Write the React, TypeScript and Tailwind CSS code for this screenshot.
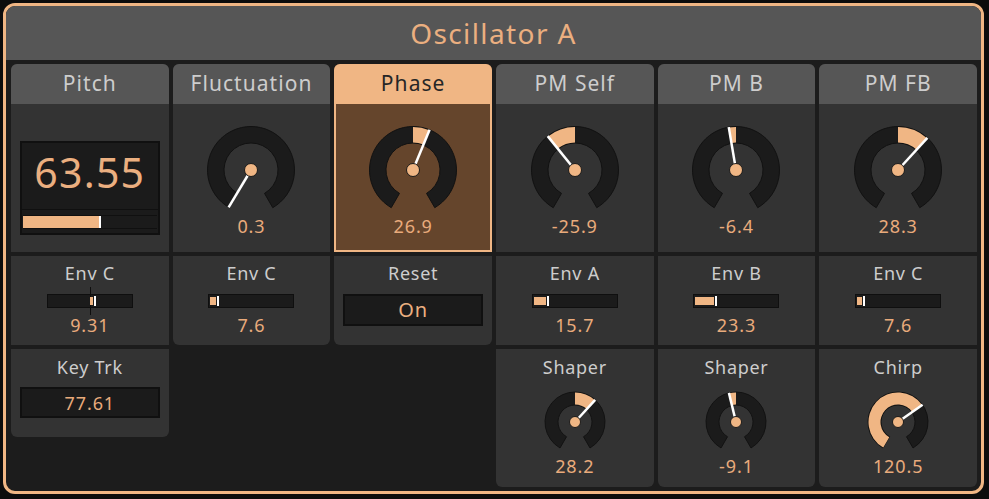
const ORANGE = '#f0b684'

function polar(cx: number, cy: number, rad: number, deg: number) {
  const a = ((deg - 90) * Math.PI) / 180
  return [cx + rad * Math.cos(a), cy + rad * Math.sin(a)]
}

function arc(cx: number, cy: number, R: number, r: number, a1: number, a2: number) {
  const [x1, y1] = polar(cx, cy, R, a1)
  const [x2, y2] = polar(cx, cy, R, a2)
  const [x3, y3] = polar(cx, cy, r, a2)
  const [x4, y4] = polar(cx, cy, r, a1)
  const large = a2 - a1 > 180 ? 1 : 0
  return `M${x1} ${y1} A${R} ${R} 0 ${large} 1 ${x2} ${y2} L${x3} ${y3} A${r} ${r} 0 ${large} 0 ${x4} ${y4} Z`
}

type KnobProps = { angle: number; from?: number; size?: 'lg' | 'sm' }

function Knob({ angle, from = 0, size = 'lg' }: KnobProps) {
  const lg = size === 'lg'
  const R = lg ? 43.5 : 30
  const r = lg ? 27 : 17
  const dot = lg ? 6.5 : 5.5
  const box = lg ? 90 : 64
  const c = box / 2
  const a1 = Math.min(from, angle)
  const a2 = Math.max(from, angle)
  const [nx, ny] = polar(c, c, R, angle)
  return (
    <svg width={box} height={box} viewBox={`0 0 ${box} ${box}`}>
      <path d={arc(c, c, R, r, -150, 150)} fill="#1b1b1b" stroke="#121212" strokeWidth={1} />
      {a2 - a1 > 0.5 && <path d={arc(c, c, R - 0.5, r + 0.5, a1, a2)} fill={ORANGE} />}
      <line x1={c} y1={c} x2={nx} y2={ny} stroke="#ffffff" strokeWidth={2.5} />
      <circle cx={c} cy={c} r={dot} fill={ORANGE} stroke="#1b1b1b" strokeWidth={1} />
    </svg>
  )
}

function Slider({ value, bipolar = false }: { value: number; bipolar?: boolean }) {
  const inner = 82
  const left = bipolar ? inner / 2 : 0
  const end = bipolar ? inner / 2 + (value / 100) * (inner / 2) : (value / 100) * inner
  return (
    <div className="relative mt-[10px] h-[14px] w-[86px] border border-[#0f0f0f] bg-[#1b1b1b]">
      {bipolar && <div className="absolute left-[42px] top-[-8px] h-[28px] w-px bg-[#0e0e0e]" />}
      <div
        className="absolute top-[2px] h-[8px] bg-[#f0b684]"
        style={{ left: 1 + Math.min(left, end), width: Math.abs(end - left) }}
      />
      <div
        className="absolute top-[1px] h-[10px] w-[4px] border-x border-[#1b1b1b] bg-white"
        style={{ left: end }}
      />
    </div>
  )
}

function Header({ label, active = false }: { label: string; active?: boolean }) {
  return (
    <div
      className={`flex h-[40px] shrink-0 items-center justify-center rounded-t-[6px] text-[21px] tracking-[0.05em] ${
        active ? 'bg-[#f0b684] text-[#262626]' : 'bg-[#565656] text-[#cdcdcd]'
      }`}
    >
      {label}
    </div>
  )
}

function Value({ children }: { children: React.ReactNode }) {
  return <div className="text-[18px] leading-[22px] tracking-[0.05em] text-[#e9ab7c]">{children}</div>
}

function Label({ children }: { children: React.ReactNode }) {
  return <div className="text-[18px] leading-[22px] tracking-[0.04em] text-[#cdcdcd]">{children}</div>
}

function KnobPanel({ label, value, angle, from, active }: { label: string; value: string; angle: number; from?: number; active?: boolean }) {
  return (
    <div className={`flex h-[188px] flex-col rounded-t-[6px] ${active ? 'bg-[#65452c]' : 'bg-[#333333]'}`}>
      <Header label={label} active={active} />
      <div
        className={`flex flex-1 flex-col items-center ${active ? 'border-x-2 border-b-2 border-[#f0b684] pt-[21px]' : 'pt-[21px]'}`}
      >
        <Knob angle={angle} from={from} />
        <Value>{value}</Value>
      </div>
    </div>
  )
}

function SliderPanel({ label, value, num, bipolar, last }: { label: string; value: string; num: number; bipolar?: boolean; last?: boolean }) {
  return (
    <div className={`flex h-[89px] flex-col items-center bg-[#333333] pt-[6px] ${last ? 'rounded-b-[6px]' : ''}`}>
      <Label>{label}</Label>
      <Slider value={num} bipolar={bipolar} />
      <div className="mt-[6px]">
        <Value>{value}</Value>
      </div>
    </div>
  )
}

function SmallKnobPanel({ label, value, angle, from }: { label: string; value: string; angle: number; from?: number }) {
  return (
    <div className="flex h-[138px] flex-col items-center rounded-b-[6px] bg-[#333333] pt-[7px]">
      <Label>{label}</Label>
      <div className="mt-[12px]">
        <Knob angle={angle} from={from} size="sm" />
      </div>
      <div className="mt-px">
        <Value>{value}</Value>
      </div>
    </div>
  )
}

export default function App() {
  return (
    <div
      className="h-[499px] w-[989px] bg-[#0c0c0c] pl-[3px] pt-[3px]"
      style={{ fontFamily: '"Noto Sans", "Open Sans", sans-serif' }}
    >
      <div className="flex h-[491px] w-[981px] flex-col overflow-hidden rounded-[12px] border-[3px] border-[#f0b684] bg-[#1c1c1c]">
        <div className="flex h-[54px] shrink-0 items-center justify-center bg-[#565656] pb-[1px] text-[28px] tracking-[0.05em] text-[#ebaf80]">
          Oscillator A
        </div>
        <div className="grid flex-1 grid-cols-6 items-start gap-x-[4px] pb-[4px] pl-[5px] pr-[4px] pt-[4px]">
          {/* Pitch */}
          <div className="flex flex-col gap-[4px]">
            <div className="flex h-[188px] flex-col rounded-t-[6px] bg-[#333333]">
              <Header label="Pitch" />
              <div className="flex flex-1 justify-center pt-[37px]">
                <div className="flex h-[94px] w-[140px] flex-col border-2 border-[#101010] bg-[#1b1b1b]">
                  <div className="flex h-[66px] items-center justify-center pb-[6px] text-[41px] tracking-[0.03em] text-[#ebaf80]">
                    63.55
                  </div>
                  <div className="h-px bg-[#101010]" />
                  <div className="relative mx-[1px] mt-[5px] h-[14px] border-y border-[#101010]">
                    <div className="absolute left-0 top-0 h-full w-[76px] bg-[#f0b684]" />
                    <div className="absolute left-[76px] top-0 h-full w-[2px] bg-white" />
                  </div>
                </div>
              </div>
            </div>
            <SliderPanel label="Env C" value="9.31" num={9.31} bipolar />
            <div className="flex h-[88px] flex-col items-center rounded-b-[6px] bg-[#333333] pt-[7px]">
              <Label>Key Trk</Label>
              <div className="mt-[9px] flex h-[31px] w-[140px] items-center justify-center border-2 border-[#101010] bg-[#1b1b1b]">
                <Value>77.61</Value>
              </div>
            </div>
          </div>

          {/* Fluctuation */}
          <div className="flex flex-col gap-[4px]">
            <KnobPanel label="Fluctuation" value="0.3" angle={-149} from={-150} />
            <SliderPanel label="Env C" value="7.6" num={7.6} last />
          </div>

          {/* Phase */}
          <div className="flex flex-col gap-[4px]">
            <KnobPanel label="Phase" value="26.9" angle={22.4} active />
            <div className="flex h-[89px] flex-col items-center rounded-b-[6px] bg-[#333333] pt-[6px]">
              <Label>Reset</Label>
              <div className="mt-[10px] flex h-[32px] w-[140px] items-center justify-center border-2 border-[#101010] bg-[#1b1b1b] text-[20px] tracking-[0.05em] text-[#ebaf80]">
                On
              </div>
            </div>
          </div>

          {/* PM Self */}
          <div className="flex flex-col gap-[4px]">
            <KnobPanel label="PM Self" value="-25.9" angle={-38.9} />
            <SliderPanel label="Env A" value="15.7" num={15.7} />
            <SmallKnobPanel label="Shaper" value="28.2" angle={42.3} />
          </div>

          {/* PM B */}
          <div className="flex flex-col gap-[4px]">
            <KnobPanel label="PM B" value="-6.4" angle={-9.6} />
            <SliderPanel label="Env B" value="23.3" num={23.3} />
            <SmallKnobPanel label="Shaper" value="-9.1" angle={-13.7} />
          </div>

          {/* PM FB */}
          <div className="flex flex-col gap-[4px]">
            <KnobPanel label="PM FB" value="28.3" angle={42.5} />
            <SliderPanel label="Env C" value="7.6" num={7.6} />
            <SmallKnobPanel label="Chirp" value="120.5" angle={55} from={-150} />
          </div>
        </div>
      </div>
    </div>
  )
}
